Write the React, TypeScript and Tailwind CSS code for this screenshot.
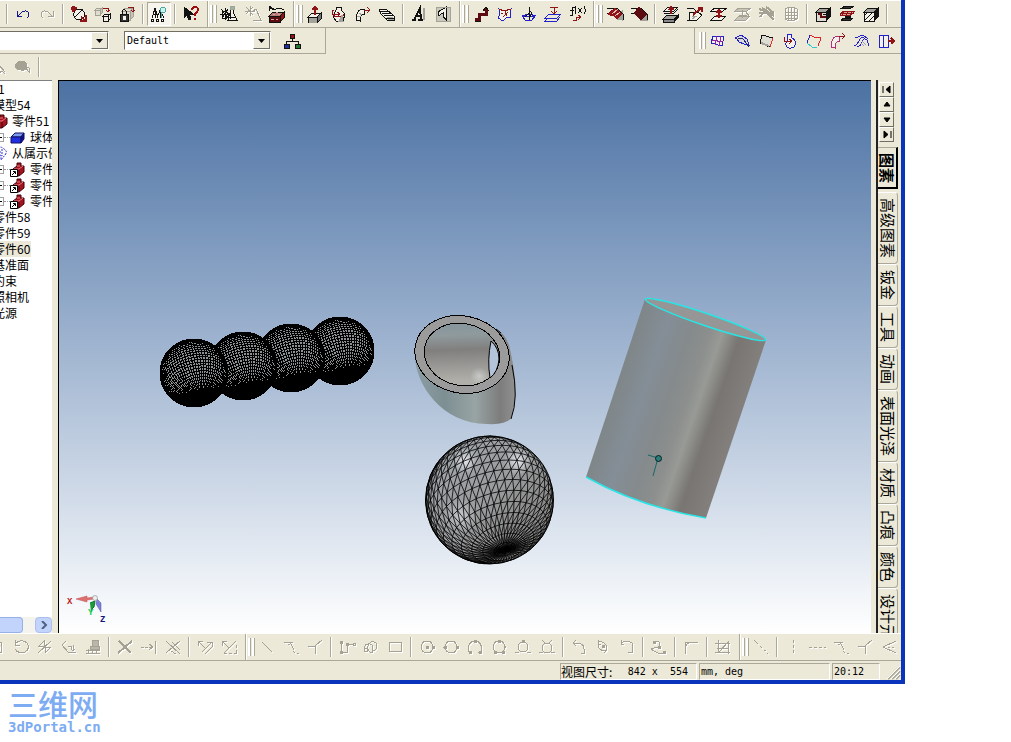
import React from "react";

type Shape = [d: string, stroke: string, fill?: string, width?: number];

const K = "#111111";
const R = "#8e1418";
const D = "#5c0c10";
const B = "#2222cc";
const G = "#a5a294";
const W = "#f4f2e8";
const S = "#a3a39b";

function cube(x: number, y: number, w: number, h: number, d: number, front: string, top: string, side: string, line: string = K): Shape[] {
  return [
    [`M${x} ${y + d}h${w}v${h}h${-w}z`, line, front],
    [`M${x} ${y + d}l${d} ${-d}h${w}l${-d} ${d}z`, line, top],
    [`M${x + w} ${y + d}l${d} ${-d}v${h}l${-d} ${d}z`, line, side],
  ];
}

const icons: Record<string, Shape[]> = {
  undo: [["M3 6v5h5M4 11l4-4c3-2 7-1 7 2 0 2-1 3-2 4", "#16168c"]],
  redo: [["M15 6v5h-5M14 11l-4-4c-3-2-7-1-7 2 0 2 1 3 2 4", G]],
  orbit: [["M9 4a5.500 5.500 0 1 0 .1 0M5 12l8-8", K, W], ["M2 2l5 1M2 2l1 5M2 2l4 4M11 12l5 4M16 10v6h-6", R, "none", 2]],
  cubeMove: [...cube(1, 3, 5, 5, 2, "#dedccf", "#dedccf", "#c5c3b8", G), ...cube(9, 9, 5, 5, 2, W, W, W), ["M9 3h5v4M12 5l2 2 2-2", R]],
  cubeLock: [...cube(4, 3, 8, 9, 3, "#dedccf", "#dedccf", "#c5c3b8", G), ["M2 9h8v7h-8z", K, "#333"], ["M4 9V6q2-3 4 0v3", K], ["M5 11h2v3h-2z", W, W], ["M10 2h5v5M13 5l2 2 2-2", R]],
  treeFind: [["M5 3l-3 10M5 3l3 10M5 3v10M10 5l-3 8M10 5l4 8M10 5v8M4 6h2M3 9h5", K], ["M1 14h2v2h-2zM6 14h2v2h-2zM11 14h2v2h-2z", K, W], ["M13 2a3 3 0 1 0 .1 0M12 8l-1 5", "#4aa4a0", "#c8f4f0"]],
  help: [["M2 2v11l3-3 2 5 2-1-2-5h4z", K, K], ["M10 5q0-3 3-3t3 3q0 2-3 4v2M12 14h2", "#a00c10", "none", 2]],
  gear: [["M2 6l4 0 3 4-3 4-4-1z", K, W], ["M1 4l7 9M8 4l-6 9M0 9h9M5 3v12", K], ["M10 4h3v3l4 8h-9l2-7z", K, W], ["M10 1h4v3h-4z", G, "#8fbab4"], ["M8 12h7M10 8v6M7 15h10", K]],
  gearOff: [["M2 2l7 8M9 2L2 9M1 6h10M6 1v10M9 6l3-2 5 11h-8", G]],
  toolbox: [...cube(1, 7, 11, 6, 4, D, "#b77977", R), ["M1 1l6 4M1 1v5M1 3h4M4 5l8-2 4 2", K], ["M3 14h3M8 14h2M5 9h2M10 9h2M8 7h2", "#d2a39b"]],
  extrude: [...cube(2, 8, 9, 6, 4, S, W, "#777"), ["M9 10V2M6 5l3-3 3 3", R, "none", 2]],
  revolve: [["M7 2h4v3l4 4-2 7H6L3 11l3-6z", K, W], ["M3 9c1 4 9 4 11 0M4 5H2v4h7M7 7l3 2-3 3", R], ["M12 10l-3 6h4z", S, S]],
  sweep: [["M2 15c0-7 3-11 8-11v5c-3 0-4 4-4 7z", K, W], ["M10 5h6M13 2l3 3-3 3", R], ["M3 11l4 1M5 8l3 2", S]],
  loft: [["M1 4h7l8 7v4H9L3 9z", K, W], ["M2 6h8M4 8h8M6 10h9M8 13h8", K], ["M10 14h6M9 12h6", S]],
  text: [["M2 15h4M8 15h5M4 15L10 3l1 12M6 11h5", K, "none", 2], ["M14 3v12", S, "none", 2]],
  emboss: [["M2 2h14v14H2z", "#cbc9bb", "#cbc9bb"], ["M4 7l8-5v13l-3-4v-3l-5 3z", K, W], ["M2 2h14v14H2z", S]],
  pathUp: [["M3 14h4V9h7V3", D, "none", 3], ["M11 6l3-4 3 4M3 16h6", K, D]],
  patch: [["M3 4l5 2 7-2-1 9-3-1-4 4-5-3 2-4z", B, W], ["M3 4l5 2 7-2M7 12l5-5M9 6l2 5M5 8h2", R]],
  plane: [["M2 11h13l-3 4H5zM2 11l7-2 7 2", B], ["M9 2v13M9 4l3 5-3 4M9 8l-4 4", K]],
  offset: [["M5 9h12l-4 4H1zM4 13L1 16h12l3-4", B], ["M6 2h8M10 3v6M7 6l3 3 3-3", R]],
  formula: [["M7 2H5L4 4v6M2 5h4M8 1L7 4v3l1 2M10 3l4 5M14 3l-4 5M16 1l1 3v3l-1 2M2 10h3", K], ["M5 15h3v-3h4M10 10l3 2-3 3", R]],
  chamfer: [["M11 14V9l5-3v9z", S, S], ["M1 3h10M1 8h6", K], ["M2 9l6-5h5l-6 7z", R, R], ["M9 3l7 6-5 5-5-6z", R, R], ["M6 9l6-5M9 11l5-4", "#e7bdb5"], ["M11 3l6 6v6", K]],
  fillet: [["M11 15l6-5v5z", S, S], ["M1 3h10M1 8h6", K], ["M9 3l7 6-5 5-6-6z", D, D, 2], ["M11 3l6 6v6", K]],
  slab: [...cube(1, 10, 11, 3, 4, "#888", S, K), ["M2 6l4-4h10l-4 4zM2 8h10l4-4", K, W], ["M9 9V3M7 5l2-3 3 3", R, "none", 2]],
  draft: [["M1 3h6l4 4H5M1 15h10l5-5", K], ["M3 7l9 0 4 3-5 5H3z", K, W], ["M7 10l8-7M12 3h4v4", R, "none", 2], ["M6 12l5-1M6 14l3-2", S]],
  split: [["M1 6l4-3h12l-4 3zM1 15l4-4h11l-4 4z", K, W], ["M9 5v8M6 8l3-3 3 3M6 11h6", R, "none", 2]],
  splitOff: [["M1 6l4-3h12l-4 3zM1 15l4-4h11l-4 4zM8 5v8M5 10h8M11 6l5 6", G, "#c8c5b8"]],
  bendOff: [["M1 4l6 2 9 9M4 3l12 8M8 2l8 6M2 12l8-10M1 8h15", G, "none", 2]],
  meshOff: [["M3 4q6-4 12 0v10q-6 4-12 0zM3 7h12M3 10h12M3 13h12M6 3v13M9 2v14M12 3v13", G]],
  shell: [...cube(2, 3, 10, 9, 4, "#dddbd0", S, K), ["M4 9h3v3h5", D, "none", 2], ["M9 9h3v3", K]],
  layers: [["M4 3l3-2h9l-3 2zM3 15l3-2h9l-3 3z", K, "#333"], ["M2 9l4-3h11l-4 4H2z", R, "#d89e98"], ["M4 10l3-4M8 10l3-4M12 10l3-4M2 8h14", R], ["M7 12h6", K, "none", 2]],
  section: [...cube(2, 3, 10, 9, 4, W, S, K), ["M3 10l3-3M3 15l8-8M7 16l5-5", K]],
  org: [["M9 6v3M3 12V9h12v3", K], ["M7 2h4v4H7z", K, R], ["M1 12h5v4H1z", K, "#2030a0"], ["M12 12h5v4h-5z", K, "#287338"]],
  sMesh: [["M4 4l11 1-2 9-11-3z", B, W], ["M8 4l-2 9M12 4l-2 10M3 8l11 2", "#9122a2"]],
  sRuled: [["M2 6l6-3 6 4 2 6-5-1-5-2-2-3z", B, "#d7d9db"], ["M4 8q4-4 7 0l5 7", "#26266b"]],
  sPatch: [["M5 3l11 3-3 9-10-4z", K, "#deddd4"], ["M16 6l-3 9", "#d33"], ["M4 11l8 3", S, "none", 2]],
  sRev: [["M6 2h4l1 4c5 2 4 10-1 10-5 1-7-5-3-7z", B, W], ["M3 5v4h7M8 7l3 2-3 3", R]],
  sEdge: [["M5 3l-3 8", B], ["M5 3l4 2 7 1-3 8", "#d22"], ["M2 11l5 4h5", "#34c8cb"]],
  sSweep: [["M2 15c0-7 3-11 8-11v5c-3 0-4 4-4 7z", "#b0307a", W], ["M10 4h6M13 1l3 3-3 3", R]],
  sOffset: [["M1 14c4 0 5-8 8-9l5 3 2 6M4 15c5 0 5-8 8-9M2 6l8-3 5 4", B, "none"], ["M9 9l4 4M8 11l3 3", "#9898c8"]],
  sExtend: [["M2 3h9v12H2z", B, W], ["M6 3v12", B], ["M11 9h6M14 6l3 3-3 3", R, "none", 2]],
  pin: [["M1 3l8 4 6 7M2 12L9 4M4 15l6-6M9 9v6l3-2 3 3", G]],
  oval: [["M7 3q6 0 6 5t-6 4-6-4 6-5z", G, G], ["M11 9l4 5v-4z", G, W]],
  box: [["M3 4h10v10H3zM7 8h4v4", G]],
  rotCcw: [["M4 5a7 6 0 1 1-1 6M3 2v5h5", G]],
  mirror: [["M2 15l13-12M3 8l5-5v5zM9 9h6l-6 6z", G]],
  polyDim: [["M2 7l4-4M2 7l6 7h8M8 8h3v3M13 7v6M11 11l2 2 2-2", G]],
  stamp: [["M8 2h6v6H8zM6 8h9v3H6z", G, "#bab7aa"], ["M2 12h14M2 15h14M4 11v5M8 12v4M12 12v4", G]],
  cross: [["M2 15L16 3M3 3l12 12", G, "none", 2]],
  extend: [["M1 9h3M5 9h3M9 9h3M9 6l4 3-4 3M15 3v13", G]],
  trim: [["M2 3l14 13M16 3L2 15M7 13l5 3M8 4l8 8", G]],
  parArrow: [["M2 3h5M2 3v5M2 3l7 7M6 14L16 4M9 16l7-7M11 4h5v5", G]],
  boxArrow: [["M2 3h5M2 3v5M2 3l7 7M4 15L16 3M4 15h3M9 15h3M14 15h2v-3M16 10V7", G]],
  line: [["M4 4l10 10", G]],
  tan: [["M2 4h6l4 8M6 7l5-3M11 13l2 2M15 15h2", G]],
  fork: [["M2 8h7l7-6M9 8v8", G]],
  poly: [["M3 3v12M3 14h6V6h7M2 3h2v2H2zM2 13h2v2H2zM8 5h2v2H8zM15 5h2v2h-2z", G]],
  spline: [["M3 12q-2-5 3-6t5 5-4 2 2-9q6-1 6 4t-5 4M2 10h3v3H2z", G]],
  rect: [["M3 4h12v9H3z", G]],
  circleDot: [["M9 3a6 6 0 1 0 .1 0", G], ["M8 8h2v2H8zM14 8h2v2h-2z", G, G]],
  circleAx: [["M9 3a6 6 0 1 0 .1 0M1 9h2M15 9h2", G], ["M2 8h2v2H2zM14 8h2v2h-2z", G, G]],
  circle3: [["M5 14H3C1 8 4 3 9 3s8 5 6 11h-3", G], ["M8 2h2v2H8zM3 13h2v2H3zM13 13h2v2h-2z", G, G]],
  circleTan: [["M9 3a6 6 0 1 0 .1 0", G], ["M8 2h2v2H8zM4 13h2v2H4zM12 13h2v2h-2z", G, G]],
  circleLine: [["M9 4a5 5 0 1 0 .1 0M1 14h4M13 14h4", G], ["M8 2h2v2H8z", G, G]],
  circleY: [["M9 5a5 5 0 1 0 .1 0M4 2l3 3M14 2l-3 3M1 14h4M13 14h4", G]],
  arcA: [["M3 5h4q7 0 7 6v4h-3M6 2L3 5l3 3", G]],
  arcB: [["M5 3q9 2 8 9l-3 3M4 2v4h3M4 6q0 7 8 7", G], ["M8 7h2v2H8z", G, G]],
  arcC: [["M3 5q5-4 11 0v6M3 2v4h3M14 9v5h-4", G]],
  curve: [["M4 4q6-2 6 2t-6 4 2 4 9 0", G], ["M3 3h2v2H3zM13 13h2v2h-2zM8 8h2v2H8z", G, G]],
  corner: [["M3 16V4h13M3 10q1-5 7-6", G]],
  crop: [["M1 5h15M4 2v12M1 14h15M14 3v13M5 14L14 4M3 10h12", G]],
  dashDiag: [["M2 2l4 4M8 8l2 2M12 12l2 1M15 15l1 1", G]],
  dashV: [["M9 2v3M9 7v3M9 12v3", G]],
  dashH: [["M1 9h3M6 9h3M11 9h3M16 9h2", G]],
  angle: [["M16 3L3 9l13 6M8 9h2M12 9h2", G]],
};

function Icon({ name, off = false }: { name: string; off?: boolean }) {
  return (
    <svg
      viewBox="0 0 18 18"
      aria-hidden="true"
      shapeRendering="crispEdges"
      className={off ? "size-[18px] shrink-0 drop-shadow-[1px_1px_0_#ffffff]" : "size-[18px] shrink-0"}
    >
      {icons[name].map(([d, stroke, fill, width], i) => (
        <path key={i} d={d} stroke={stroke} fill={fill ?? "none"} strokeWidth={width ?? 1} />
      ))}
    </svg>
  );
}

function Tool({ name, off, pressed }: { name: string; off?: boolean; pressed?: boolean }) {
  return (
    <button
      type="button"
      aria-label={name}
      aria-pressed={pressed}
      disabled={off}
      className={
        pressed
          ? "flex h-6 w-6 shrink-0 items-center justify-center border border-t-[#aca899] border-l-[#aca899] border-r-white border-b-white bg-[#f6f4ec]"
          : "flex h-6 w-6 shrink-0 items-center justify-center"
      }
    >
      <Icon name={name} off={off} />
    </button>
  );
}

function Sep() {
  return (
    <span className="flex w-2 shrink-0 justify-center self-stretch py-[3px]">
      <span className="w-0.5 border-l border-[#aca899] bg-white" />
    </span>
  );
}

function Grip() {
  return (
    <span className="flex gap-px self-stretch py-1">
      <span className="w-[3px] border-r border-[#aca899] bg-white" />
      <span className="w-[3px] border-r border-[#aca899] bg-white" />
    </span>
  );
}

function BandBreak() {
  return (
    <span className="flex w-[14px] shrink-0 self-stretch">
      <span className="ml-1 w-0.5 border-l border-[#aca899] bg-white" />
      <span className="ml-px flex self-stretch">
        <Grip />
      </span>
    </span>
  );
}

// "|" is a separator, "||" starts a new band, "-" marks a disabled tool, "*" a pressed one
function Tools({ items }: { items: string }) {
  return (
    <>
      {items.split(" ").map((item, i) => {
        if (item === "|") return <Sep key={i} />;
        if (item === "||") return <BandBreak key={i} />;
        return <Tool key={i} name={item.replace(/^[-*]/, "")} off={item.startsWith("-")} pressed={item.startsWith("*") || undefined} />;
      })}
    </>
  );
}

const topTools =
  "undo -redo | orbit cubeMove cubeLock | *treeFind | help || gear -gearOff toolbox || extrude revolve sweep loft | text emboss || pathUp patch plane offset formula || chamfer fillet | slab draft split -splitOff -bendOff -meshOff | shell layers section |";
const surfaceTools = "sMesh sRuled sPatch sRev sEdge sSweep sOffset sExtend";
const sketchTools =
  "-box -rotCcw -mirror -polyDim -stamp | -cross -extend -trim | -parArrow -boxArrow || -line -tan -fork | -poly -spline -rect | -circleDot -circleAx -circle3 -circleTan -circleLine -circleY | -arcA -arcB -arcC | -curve | -corner | -crop || -dashDiag | -dashV -dashH -tan -fork -angle";

function Combo({ label, options, className }: { label: string; options: string[]; className: string }) {
  return (
    <div className={`relative h-[19px] shrink-0 ${className}`}>
      <select
        aria-label={label}
        className="block h-full w-full appearance-none border border-t-[#716f64] border-l-[#716f64] border-r-white border-b-white bg-white pr-5 pl-0.5 font-['DejaVu_Sans_Mono',monospace] text-[10px] leading-4 text-black"
      >
        {options.map((o) => (
          <option key={o}>{o}</option>
        ))}
      </select>
      <span className="pointer-events-none absolute inset-y-px right-px flex w-[17px] items-center justify-center border border-t-white border-l-white border-r-[#716f64] border-b-[#716f64] bg-[#ece9d8]">
        <svg viewBox="0 0 7 4" className="h-1 w-[7px]" aria-hidden="true">
          <path d="M0 0h7L3.500 4z" fill="#000" />
        </svg>
      </span>
    </div>
  );
}

function TreeIcon({ kind }: { kind: "part" | "link" | "box" | "group" }) {
  return (
    <svg viewBox="0 0 15 15" className="size-[15px] shrink-0" aria-hidden="true">
      {kind === "box" && (
        <>
          <path d="M1 7l4-4h9l-3 4z" fill="#7d9bee" stroke="#111166" />
          <path d="M1 7h10v6H1z" fill="#1e2ee0" stroke="#111166" />
          <path d="M11 7l3-4v6l-3 4z" fill="#111188" stroke="#111166" />
        </>
      )}
      {kind === "group" && (
        <path d="M2 3q5-4 9 0 4 2 1 6l-4 5V9H3zM3 6h6M9 3v7" fill="#fff" stroke="#3030d0" strokeDasharray="2 1" />
      )}
      {(kind === "part" || kind === "link") && (
        <>
          <path d="M3 7l4-3V1h4l0 3h3v6l-5 4H3z" fill="#a31420" stroke="#400408" />
          <path d="M4 7h5l4-3M7 4h3" fill="none" stroke="#f07880" />
          <path d="M9 8v6" fill="none" stroke="#400408" />
        </>
      )}
      {kind === "link" && (
        <>
          <path d="M.5 7.500h7v7h-7z" fill="#fff" stroke="#000" />
          <path d="M2 13l3-3M3 9.500h2.500V12" fill="none" stroke="#000" />
        </>
      )}
    </svg>
  );
}

function Expander() {
  return (
    <>
      <button type="button" aria-label="+" className="flex size-[9px] shrink-0 items-center justify-center border border-[#a0a0a0] bg-white">
        <svg viewBox="0 0 5 5" className="size-[5px]" aria-hidden="true">
          <path d="M0 2.500h5M2.500 0v5" stroke="#000" />
        </svg>
      </button>
      <span className="w-[6px] shrink-0 border-t border-dotted border-[#999]" />
    </>
  );
}

type Node = { text: string; icon?: "part" | "link" | "box" | "group"; child?: boolean; selected?: boolean };
const nodes: Node[] = [
  { text: "模型54" },
  { text: "零件51", icon: "part" },
  { text: "球体", icon: "box", child: true },
  { text: "从属示例", icon: "group" },
  { text: "零件", icon: "link", child: true },
  { text: "零件", icon: "link", child: true },
  { text: "零件", icon: "link", child: true },
  { text: "零件58" },
  { text: "零件59" },
  { text: "零件60", selected: true },
  { text: "基准面" },
  { text: "约束" },
  { text: "照相机" },
  { text: "光源" },
];

function SceneTree() {
  return (
    <aside className="flex w-[52px] shrink-0 flex-col overflow-hidden border-t border-[#808080] bg-white">
      <ul className="-ml-[7px] flex-1 overflow-hidden text-xs leading-4 whitespace-nowrap">
        <li className="flex h-4 items-center pl-[5px]">1</li>
        {nodes.map((n, i) => (
          <li key={i} className={n.child ? "flex h-4 items-center pl-0.5" : "flex h-4 items-center"}>
            {n.child && <Expander />}
            {n.icon && <TreeIcon kind={n.icon} />}
            <span className={n.child ? "pl-[5px]" : n.icon ? "pl-1" : n.selected ? "bg-[#ece9d8] pr-px" : ""}>{n.text}</span>
          </li>
        ))}
      </ul>
      <div className="flex h-4 items-stretch bg-[#f4f3ee]">
        <button type="button" aria-label="scroll" className="w-[23px] rounded-r-sm border border-l-0 border-[#98b0e8] bg-[#c2d3fc]" />
        <span className="flex-1" />
        <button type="button" aria-label="right" className="flex w-[17px] items-center justify-center rounded-sm border border-[#a9bff0] bg-[#c2d3fc]">
          <svg viewBox="0 0 8 8" className="size-2" aria-hidden="true">
            <path d="M2 0l4 4-4 4" fill="none" stroke="#4d6185" strokeWidth="2" />
          </svg>
        </button>
      </div>
    </aside>
  );
}

type Vec = [number, number, number];

function sphereMesh(cx: number, cy: number, r: number, px: number, py: number, meridians: number, parallels: number, diagonals: boolean) {
  const pz = Math.sqrt(Math.max(0, 1 - px * px - py * py));
  const pole: Vec = [px, py, pz];
  const ul = Math.hypot(pz, px);
  const u: Vec = [pz / ul, 0, -px / ul];
  const v: Vec = [pole[1] * u[2] - pole[2] * u[1], pole[2] * u[0] - pole[0] * u[2], pole[0] * u[1] - pole[1] * u[0]];
  const at = (i: number, j: number): Vec => {
    const t = (i * Math.PI) / parallels;
    const f = (j * 2 * Math.PI) / meridians;
    const s = Math.sin(t);
    const c = Math.cos(t);
    return [0, 1, 2].map((k) => pole[k] * c + (u[k] * Math.cos(f) + v[k] * Math.sin(f)) * s) as Vec;
  };
  let d = "";
  const seg = (a: Vec, b: Vec) => {
    if (a[2] < -0.02 || b[2] < -0.02) return;
    d += `M${(cx + a[0] * r).toFixed(1)} ${(cy + a[1] * r).toFixed(1)}L${(cx + b[0] * r).toFixed(1)} ${(cy + b[1] * r).toFixed(1)}`;
  };
  for (let i = 0; i < parallels; i++) {
    for (let j = 0; j < meridians; j++) {
      seg(at(i, j), at(i + 1, j));
      seg(at(i, j), at(i, j + 1));
      if (diagonals) seg(at(i, j), at(i + 1, j + 1));
    }
  }
  return d;
}

const bigMesh = sphereMesh(489.5, 500, 64, 0.24, 0.78, 44, 18, true);
const beads = [
  [340, 351],
  [291, 358],
  [243, 366],
  [194, 373],
].map(([x, y]) => ({ x, y, d: sphereMesh(x, y, 34, 0.18, 0.78, 72, 36, false) }));

function Scene() {
  return (
    <svg viewBox="59 81 812 552" preserveAspectRatio="xMidYMid slice" className="absolute inset-0 h-full w-full" role="img" aria-label="3D">
      <defs>
        <linearGradient id="cyl" gradientUnits="userSpaceOnUse" x1="615" y1="388" x2="735" y2="429">
          <stop offset="0" stopColor="#7f8688" />
          <stop offset=".22" stopColor="#848e97" />
          <stop offset=".42" stopColor="#858a8c" />
          <stop offset=".57" stopColor="#8c8f8d" />
          <stop offset=".66" stopColor="#989a96" />
          <stop offset=".8" stopColor="#787572" />
          <stop offset="1" stopColor="#827f7c" />
        </linearGradient>
        <linearGradient id="inner" x1="0" y1="0" x2=".3" y2="1">
          <stop offset="0" stopColor="#7f939d" />
          <stop offset=".3" stopColor="#8f9a9d" />
          <stop offset=".52" stopColor="#817f7e" />
          <stop offset=".78" stopColor="#9b9a97" />
          <stop offset="1" stopColor="#b0afa9" />
        </linearGradient>
        <linearGradient id="outer" x1="0" y1="0" x2="1" y2="0">
          <stop offset="0" stopColor="#8b9ca4" />
          <stop offset=".3" stopColor="#7e8f93" />
          <stop offset=".6" stopColor="#98a4a4" />
          <stop offset=".85" stopColor="#7c7d7c" />
          <stop offset="1" stopColor="#90918f" />
        </linearGradient>
        <radialGradient id="hi">
          <stop offset="0" stopColor="#e6e8ee" />
          <stop offset="1" stopColor="#dcdfe6" stopOpacity="0" />
        </radialGradient>
        <linearGradient id="ball" x1="0" y1="0" x2="1" y2="1">
          <stop offset="0" stopColor="#a2a9ae" />
          <stop offset=".5" stopColor="#9a9c9d" />
          <stop offset="1" stopColor="#777571" />
        </linearGradient>
      </defs>

      {beads.map((b) => (
        <g key={b.x} shapeRendering="crispEdges">
          <circle cx={b.x} cy={b.y} r="34" fill="#8c9292" stroke="#000" />
          <path d={b.d} stroke="#000" fill="none" />
          <circle cx={b.x} cy={b.y} r="33" fill="none" stroke="#000" strokeWidth="2" />
        </g>
      ))}

      <path d="M415 352C413 381 440 424 487 424Q507 425 511 418C517 401 517 377 509 345Q505 334 496 329z" fill="url(#outer)" />
      <path d="M496 329l5 4M512 365Q519 398 511 419" fill="none" stroke="#000" />
      <g shapeRendering="crispEdges">
        <ellipse cx="462" cy="354.500" rx="47.500" ry="38.500" transform="rotate(12 462 354.500)" fill="#9b9b9b" stroke="#000" />
        <ellipse cx="462" cy="354.500" rx="38" ry="31" transform="rotate(12 462 354.500)" fill="url(#inner)" stroke="#000" />
      </g>
      <circle cx="479" cy="376" r="9" fill="url(#hi)" opacity=".5" />
      <path d="M491 341Q499 348 499 359Q498 372 490 378Q487 360 491 341z" fill="#b3c3da" stroke="#000" />

      <circle cx="489.500" cy="500" r="64" fill="url(#ball)" />
      <circle cx="465" cy="461" r="13" fill="url(#hi)" />
      <circle cx="518" cy="461" r="14" fill="url(#hi)" />
      <circle cx="461" cy="516" r="17" fill="url(#hi)" opacity=".6" />
      <path d={bigMesh} stroke="#000" strokeWidth=".8" fill="none" />
      <circle cx="489.500" cy="500" r="64" fill="none" stroke="#000" />

      <path d="M645 299L766 340L706 518Q640 507 586 477z" fill="url(#cyl)" />
      <path d="M706 518Q640 507 586 477" fill="none" stroke="#29e4e4" strokeWidth="1.500" />
      <ellipse cx="705.500" cy="319.500" rx="63.500" ry="6" transform="rotate(18.700 705.500 319.500)" fill="#969696" stroke="#29e4e4" strokeWidth="1.500" />
      <path d="M648 455l10 3-5 18" fill="none" stroke="#146a68" />
      <circle cx="658.500" cy="458.500" r="3" fill="#2b7d7d" stroke="#062020" />

      <path d="M76 599l11-3v2l7-1v2l-7 1v2z" fill="#e07070" stroke="#b85050" strokeWidth=".5" />
      <path d="M97 599l-1 5 5 8v-9z" fill="#7f7fdc" stroke="#5656a8" strokeWidth=".5" />
      <path d="M90 603l5-2-1 6-2 2-1 3" fill="#1c9c3b" stroke="#0c7c2b" />
      <circle cx="95" cy="598" r="2.500" fill="#eee" stroke="#888" strokeWidth=".6" />
      <g fontFamily="Liberation Mono, monospace" fontSize="9" fontWeight="700">
        <text x="67" y="604" fill="#c01818">X</text>
        <text x="88" y="615" fill="#20cc48">Y</text>
        <text x="100" y="622" fill="#181880">Z</text>
      </g>
    </svg>
  );
}

const tabs = ["图素", "高级图素", "钣金", "工具", "动画", "表面光泽", "材质", "凸痕", "颜色", "设计元素"];
const navArrows = ["M1 1v7M8 1v7L4 4.500z", "M5 2l3 4H2z", "M5 7l3-4H2z", "M9 1v7M2 1v7l4-3.500z"];

function CatalogTabs() {
  return (
    <div className="flex w-[30px] shrink-0 pr-[3px] pl-[5px]">
      <div className="flex min-h-0 flex-1 flex-col overflow-hidden border-l-2 border-[#222] pt-0.5">
        <div className="mb-[5px] flex flex-col pl-px">
          {navArrows.map((d) => (
            <button key={d} type="button" aria-label="scroll tabs" className="flex h-[15px] w-[15px] items-center justify-center border border-t-white border-l-white border-r-[#716f64] border-b-[#716f64]">
              <svg viewBox="0 0 10 9" className="h-[9px] w-[10px]" aria-hidden="true">
                <path d={d} fill="#000" stroke="#000" />
              </svg>
            </button>
          ))}
        </div>
        <div role="tablist" aria-orientation="vertical" className="flex flex-col text-[15px] leading-[18px]">
          {tabs.map((t, i) => (
            <button
              key={t}
              type="button"
              role="tab"
              aria-selected={i === 0}
              className={
                i === 0
                  ? "mb-[3px] flex w-5 shrink-0 items-center justify-center border-t border-r-2 border-b-2 border-t-[#aca899] border-r-black border-b-black pt-[5px] pb-1 font-bold [text-orientation:sideways] [writing-mode:vertical-rl]"
                  : "flex w-5 shrink-0 items-center justify-center rounded-r-sm border border-l-0 border-t-white border-r-[#aca899] border-b-[#aca899] pt-[5px] pb-[5px] [text-orientation:sideways] [writing-mode:vertical-rl]"
              }
            >
              {t}
            </button>
          ))}
        </div>
      </div>
    </div>
  );
}

export default function App() {
  return (
    <div className="flex h-screen flex-col overflow-hidden bg-white font-['Noto_Sans_CJK_SC',sans-serif] text-black">
      <div className="mr-[106px] flex min-h-0 flex-1 flex-col border-r-4 border-b-4 border-[#0a34bb] bg-[#ece9d8]">
        <div className="flex h-7 shrink-0 items-center overflow-hidden border-t border-b border-t-white border-b-[#aca899] pl-[3px]">
          <Tools items={"| " + topTools} />
        </div>

        <div className="flex h-[26px] shrink-0 justify-between">
          <div className="-ml-px flex items-center border-r border-b border-[#aca899] pr-[21px]">
            <Combo label="Style" options={[""]} className="w-[110px]" />
            <Combo label="Configuration" options={["Default"]} className="ml-[15px] w-[147px]" />
            <span className="ml-[9px] flex">
              <Tool name="org" />
            </span>
          </div>
          <div className="flex items-center border-b border-l border-[#aca899] pr-[3px] pl-1">
            <Grip />
            <Tools items={surfaceTools} />
          </div>
        </div>

        <div className="-ml-[13px] flex h-[26px] shrink-0 items-center">
          <Tools items="-pin -oval |" />
        </div>

        <main className="flex min-h-0 flex-1">
          <SceneTree />
          <div className="relative ml-1.5 min-w-0 flex-1 border-t border-l border-black bg-linear-to-b from-[#4c72a3] to-white">
            <Scene />
          </div>
          <CatalogTabs />
        </main>

        <div className="flex h-7 shrink-0 items-center justify-end overflow-hidden border-t border-b border-t-white border-b-[#aca899]">
          <Tools items={sketchTools} />
        </div>

        <footer className="flex h-[19px] shrink-0 items-stretch justify-end gap-0.5 pt-0.5 text-xs leading-4 whitespace-pre">
          <div className="flex w-[137px] items-center border border-t-[#aca899] border-l-[#aca899] border-r-white border-b-white">
            视图尺寸:
            <span className="ml-auto pr-2 font-['DejaVu_Sans_Mono',monospace] text-[10px]">{"842 x  554"}</span>
          </div>
          <div className="flex w-[131px] items-center border border-t-[#aca899] border-l-[#aca899] border-r-white border-b-white pl-px font-['DejaVu_Sans_Mono',monospace] text-[10px]">
            mm, deg
          </div>
          <div className="flex w-12 items-center border border-t-[#aca899] border-l-[#aca899] border-r-white border-b-white pl-px font-['DejaVu_Sans_Mono',monospace] text-[10px]">
            20:12
          </div>
          <svg viewBox="0 0 19 17" className="h-[17px] w-[19px]" aria-hidden="true">
            <path d="M6 16L18 4M10 16l8-8M14 16l4-4" stroke="#aca899" strokeWidth="2" />
            <path d="M5 16L18 3M9 16l9-9M13 16l5-5" stroke="#fff" />
          </svg>
        </footer>
      </div>

      <div className="flex h-[58px] shrink-0 flex-col pt-1 pl-2 text-[#7dacf2]">
        <span className="text-[30px] leading-[30px] font-medium">三维网</span>
        <span className="font-['DejaVu_Sans_Mono',monospace] text-[14px] leading-[18px] font-bold">3dPortal.cn</span>
      </div>
    </div>
  );
}
